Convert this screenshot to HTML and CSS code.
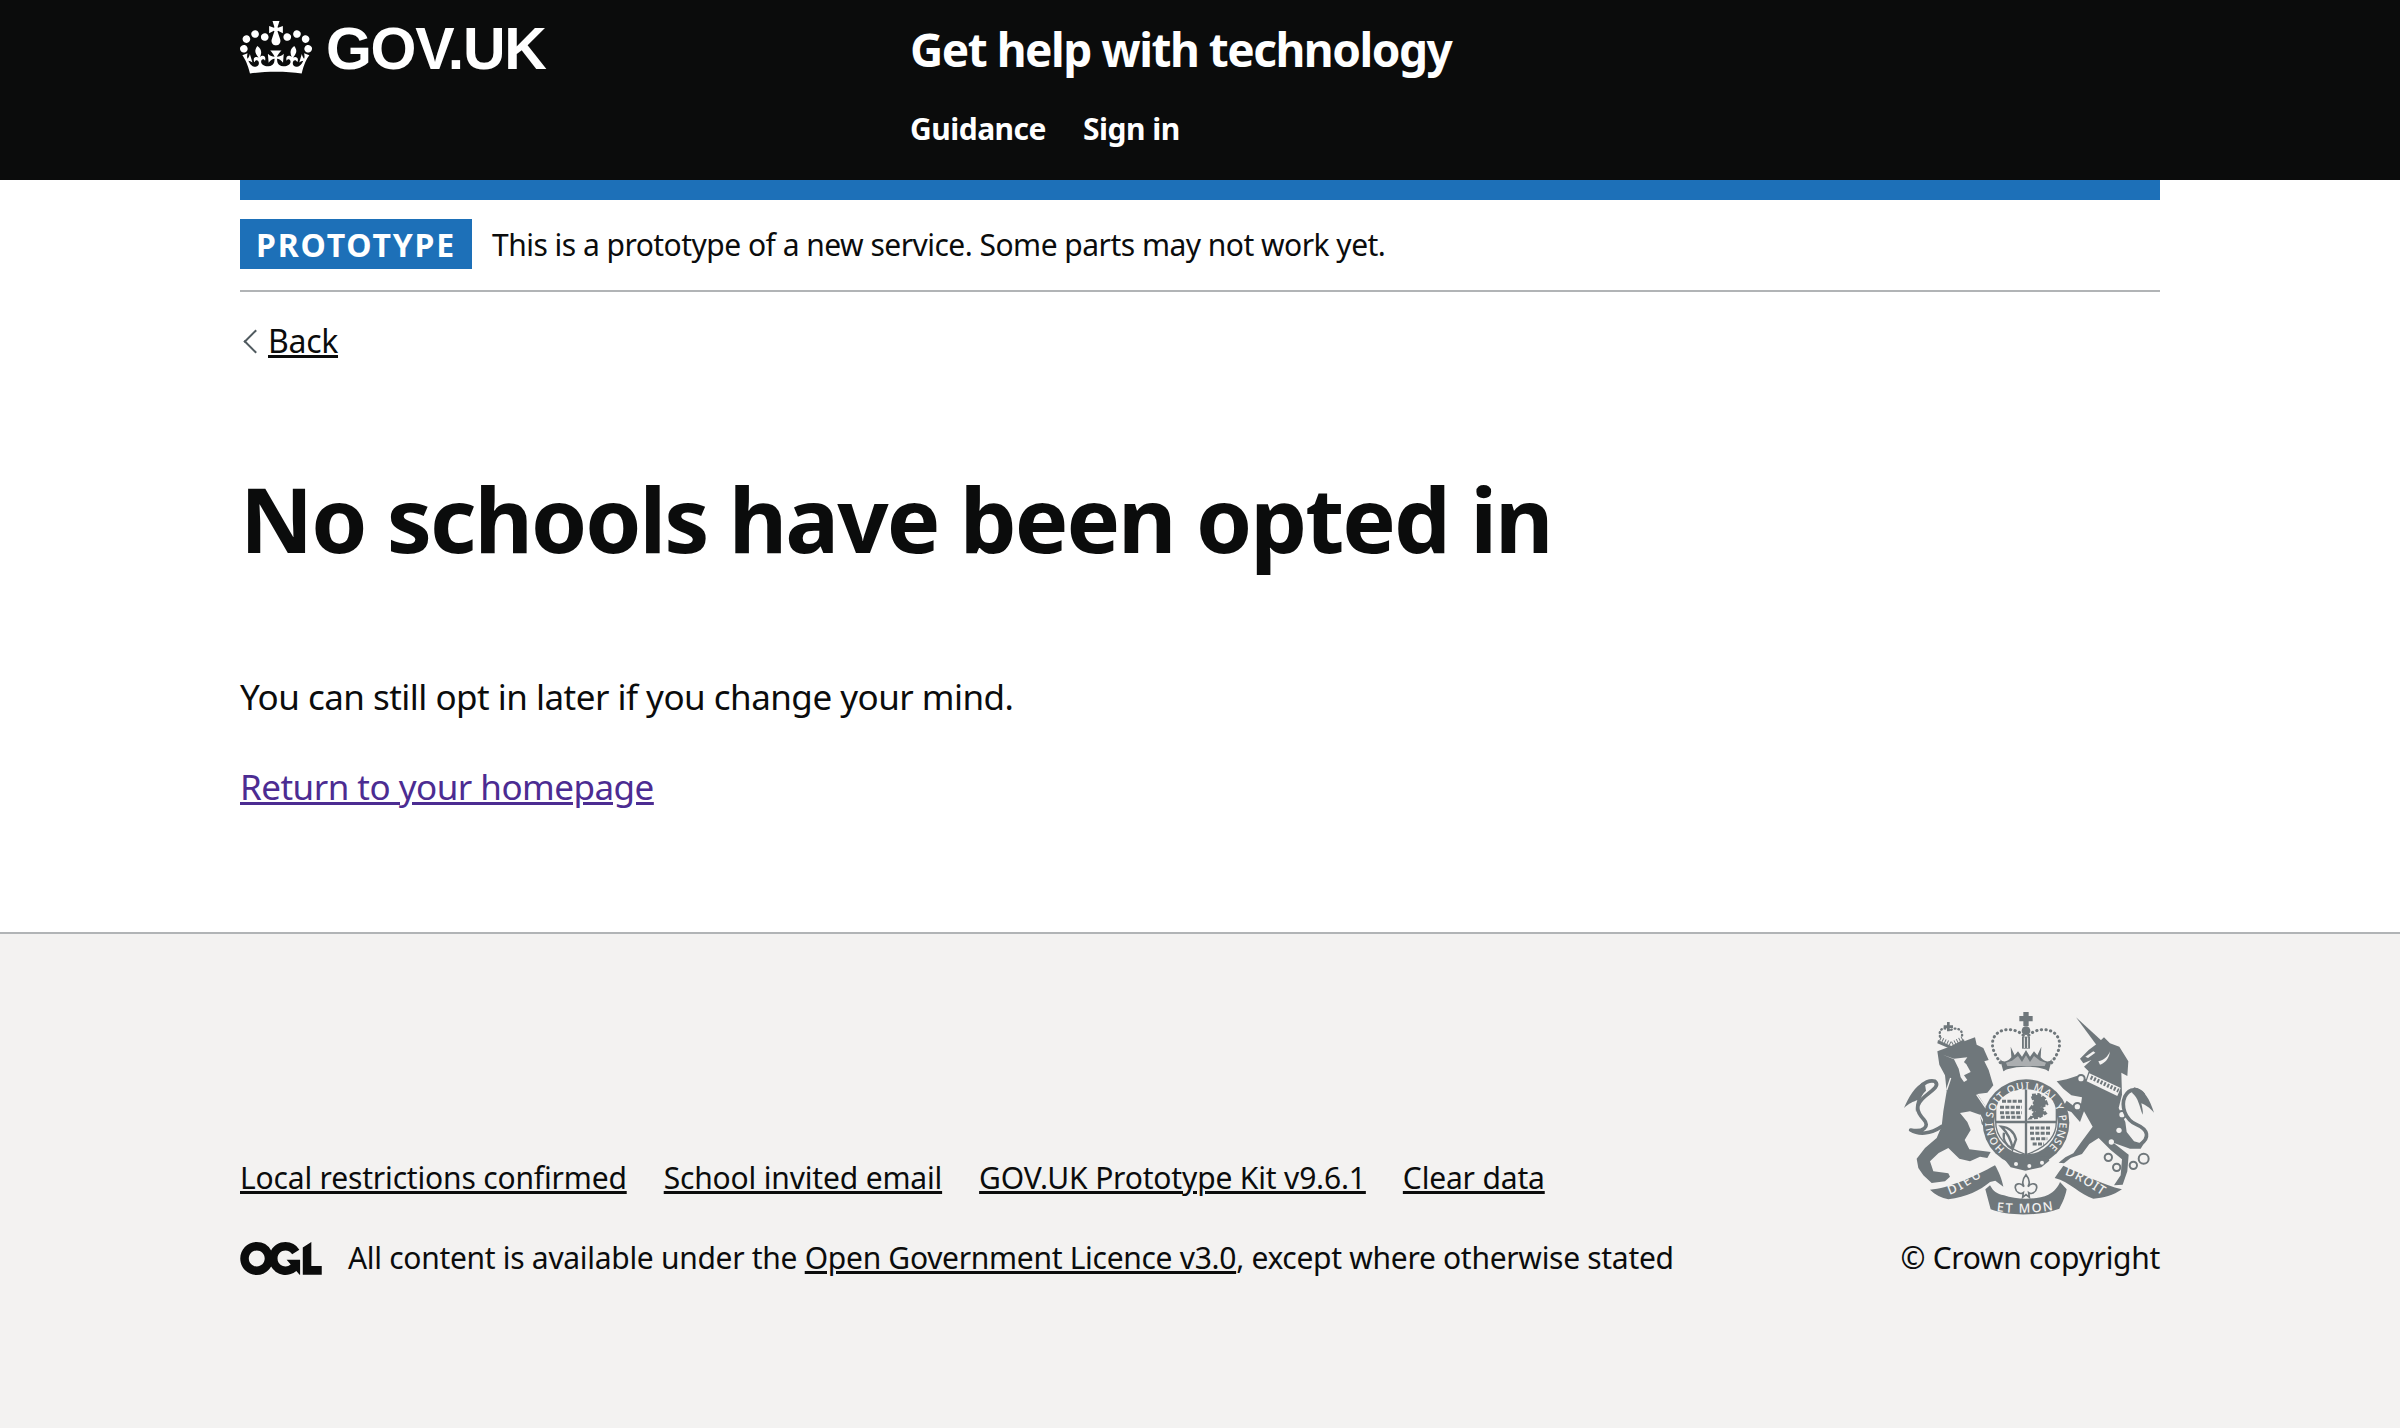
FILE: index.html
```html
<!DOCTYPE html>
<html lang="en">
<head>
<meta charset="utf-8">
<title>No schools have been opted in</title>
<link rel="stylesheet" href="styles.css">
</head>
<body>
<header class="site-header">
  <div class="header-inner">
    <a class="logo" href="#">
      <svg class="crown" viewBox="0 0 132 97" aria-hidden="true"><path fill="currentColor" fill-rule="evenodd" d="M25 30.2c3.5 1.5 7.7-.2 9.1-3.7 1.5-3.6-.2-7.8-3.9-9.2-3.6-1.4-7.6.3-9.1 3.9-1.4 3.5.3 7.5 3.9 9zM9 39.5c3.6 1.5 7.8-.2 9.2-3.7 1.5-3.6-.2-7.8-3.9-9.1-3.6-1.5-7.6.2-9.1 3.8-1.4 3.5.3 7.5 3.8 9zM4.4 57.2c3.5 1.5 7.7-.2 9.1-3.8 1.5-3.6-.2-7.7-3.9-9.1-3.5-1.5-7.6.3-9.1 3.8-1.4 3.5.3 7.6 3.9 9.1zm38.3-21.4c3.5 1.5 7.7-.2 9.1-3.8 1.5-3.6-.2-7.7-3.9-9.1-3.6-1.5-7.6.3-9.1 3.8-1.3 3.6.4 7.7 3.9 9.1zm64.4-5.6c-3.6 1.5-7.8-.2-9.1-3.7-1.5-3.6.2-7.8 3.8-9.2 3.6-1.4 7.7.3 9.2 3.9 1.3 3.5-.4 7.5-3.9 9zm15.9 9.3c-3.6 1.5-7.7-.2-9.1-3.7-1.5-3.6.2-7.8 3.7-9.1 3.6-1.5 7.7.2 9.2 3.8 1.5 3.5-.3 7.5-3.8 9zm4.7 17.7c-3.6 1.5-7.8-.2-9.2-3.8-1.5-3.6.2-7.7 3.9-9.1 3.6-1.5 7.7.3 9.2 3.8 1.3 3.5-.4 7.6-3.9 9.1zM89.3 35.8c-3.6 1.5-7.8-.2-9.2-3.8-1.4-3.6.2-7.7 3.9-9.1 3.6-1.5 7.7.3 9.2 3.8 1.4 3.6-.3 7.7-3.9 9.1zM69.7 17.7l8.9 4.7V9.3l-8.9 2.8c-.2-.3-.5-.6-.9-.9L72.4 0H59.6l3.5 11.2c-.3.3-.6.5-.9.9l-8.8-2.8v13.1l8.8-4.7c.3.3.6.7.9.9l-5 15.4v.1c-.2.8-.4 1.6-.4 2.4 0 4.1 3.1 7.5 7 8.1h.2c.3 0 .7.1 1 .1.4 0 .7 0 1-.1h.2c4-.6 7.1-4.1 7.1-8.1 0-.8-.1-1.7-.4-2.4V34l-5.1-15.4c.4-.2.7-.6 1-.9zM66 92.8c16.9 0 32.8 1.1 47.1 3.2 4-16.9 8.9-26.7 14-33.5l-9.6-3.4c1 4.9 1.1 7.2 0 10.2-1.5-1.4-3-4.3-4.2-8.7L108.6 76c2.8-2 5-3.2 7.5-3.3-4.4 9.4-10 11.9-13.6 11.2-4.3-.8-6.3-4.6-5.6-7.9 1-4.7 5.7-5.9 8-.5 4.3-8.7-3-11.4-7.6-8.8 7.1-7.2 7.9-13.5 2.1-21.1-8 6.1-8.1 12.3-4.5 20.8-4.7-5.4-12.1-2.5-9.5 6.2 3.4-5.2 7.9-2 7.2 3.1-.6 4.3-6.4 7.8-13.5 7.2-10.3-.9-10.9-8-11.2-13.8 2.5-.5 7.1 1.8 11 7.3L80.2 60c-4.1 4.4-8 5.3-12.3 5.4 1.4-4.4 8-11.6 8-11.6H55.5s6.4 7.2 7.9 11.6c-4.2-.1-8-1-12.3-5.4l1.4 16.4c3.9-5.5 8.5-7.7 10.9-7.3-.3 5.8-.9 12.8-11.1 13.8-7.2.6-12.9-2.9-13.5-7.2-.7-5 3.8-8.3 7.1-3.1 2.7-8.7-4.6-11.6-9.4-6.2 3.7-8.5 3.6-14.7-4.6-20.8-5.8 7.6-5 13.9 2.2 21.1-4.7-2.6-11.9.1-7.7 8.8 2.3-5.5 7.1-4.2 8.1.5.7 3.3-1.3 7.1-5.7 7.9-3.5.7-9-1.8-13.5-11.2 2.5.1 4.7 1.3 7.5 3.3l-4.7-15.4c-1.2 4.4-2.7 7.2-4.3 8.7-1.1-3-.9-5.3 0-10.2l-9.5 3.4c5 6.9 9.9 16.7 14 33.5 14.8-2.1 30.8-3.2 47.7-3.2z"/></svg>
      <span class="logo-text">GOV.UK</span>
    </a>
    <div class="header-content">
      <a class="service-name" href="#">Get help with technology</a>
      <nav class="header-nav">
        <a href="#">Guidance</a>
        <a href="#">Sign in</a>
      </nav>
    </div>
  </div>
</header>

<div class="width">
  <div class="blue-bar"></div>
  <div class="phase-banner">
    <strong class="tag">PROTOTYPE</strong>
    <span class="phase-text">This is a prototype of a new service. Some parts may not work yet.</span>
  </div>
  <a class="back-link" href="#">Back</a>
  <main class="main">
    <h1 class="heading">No schools have been opted in</h1>
    <p class="body-text">You can still opt in later if you change your mind.</p>
    <p class="body-text"><a class="visited-link" href="#">Return to your homepage</a></p>
  </main>
</div>

<footer class="footer">
  <div class="footer-inner">
    <div class="footer-meta">
      <ul class="footer-links">
        <li><a href="#">Local restrictions confirmed</a></li>
        <li><a href="#">School invited email</a></li>
        <li><a href="#">GOV.UK Prototype Kit v9.6.1</a></li>
        <li><a href="#">Clear data</a></li>
      </ul>
      <div class="licence">
        <svg class="ogl" viewBox="0 0 483.2 195.7" aria-hidden="true"><path fill="currentColor" d="M421.5 142.8V.1l-50.7 32.3v161.1h112.4v-50.7zm-122.3-9.6A47.12 47.12 0 0 1 221 97.8c0-26 21.1-47.1 47.1-47.1 16.7 0 31.4 8.7 39.7 21.8l42.7-27.2A97.63 97.63 0 0 0 268.1 0c-36.5 0-68.3 20.1-85.1 49.7A98 98 0 0 0 97.8 0C43.9 0 0 43.9 0 97.8s43.9 97.8 97.8 97.8c36.5 0 68.3-20.1 85.1-49.7a97.76 97.76 0 0 0 149.6 25.4l19.4 22.2h3v-87.8h-80l24.3 27.5zM97.8 145c-26 0-47.1-21.1-47.1-47.1s21.1-47.1 47.1-47.1 47.2 21 47.2 47S123.8 145 97.8 145"/></svg>
        <span>All content is available under the <a href="#">Open Government Licence v3.0</a>, except where otherwise stated</span>
      </div>
    </div>
    <div class="copyright">
      <svg class="crest" viewBox="0 0 900 720" aria-hidden="true">
        <defs>
          <path id="garter" d="M375 452A100 100 0 1 1 501 452"/>
          <path id="rbL" d="M208 590C245 580 280 550 316 530"/>
          <path id="rbM" d="M350 640C400 646 480 646 528 634"/>
          <path id="rbR" d="M553 530C590 540 630 570 676 598"/>
        </defs>
        <g class="crest-ink">
          <!-- lion crown -->
          <path d="M201 72h8V82h10v8H209v10h-8V90H191V82h10z"/>
          <path class="crest-open" d="M180 116c-6-30 20-28 30-18 10-10 40-10 36 18"/>
          <path class="crest-lattice" d="M180 122l34 16 34-18"/>
          <path d="M174 126l40 18 38-20 2 8-40 22-42-18z"/>
          <!-- lion tail -->
          <path class="crest-line" d="M186 385C150 410 115 410 92 396 130 404 150 385 132 365 108 340 105 320 135 295 165 272 178 262 165 250 150 245 130 254 118 270"/>
          <path d="M134 252C105 262 85 300 72 330 88 315 98 312 112 306 108 318 106 330 108 342 118 320 118 296 138 278z"/>
          <!-- lion body -->
          <path d="M172 160 285 118 290 140 310 150 326 186 313 190 326 216 336 250 340 262 322 284 292 288 312 318 330 345 346 385 338 400 318 392 305 378 300 350 270 340 240 345 262 372 272 396 254 426 268 454 332 462 322 480 300 476 270 490 238 482 205 450 176 465 150 490 160 520 205 526 210 536 195 550 155 555 130 532 115 510 110 482 135 450 170 420 185 385 190 340 200 280 195 232 178 200z"/>
          <path class="crest-bg" d="M188 170 222 182 262 178 252 192 262 204 272 222 252 232 262 246 252 252 242 238 236 212 222 184z"/>
          <circle cx="250" cy="206" r="11" class="crest-bg"/>
          <path class="crest-cut" d="M290 290 330 348M300 350 312 376M212 240 200 276"/>
          <!-- crown -->
          <path d="M430 42h16v12h12v16h-12v14h-16V70h-12V54h12z"/>
          <circle cx="438" cy="98" r="13"/>
          <path d="M426 116h24v36h-24z"/>
          <path class="crest-thin" d="M433 118v32M443 118v32"/>
          <path class="crest-dots" d="M430 112C400 84 345 90 338 130 334 156 350 176 362 196M446 112C476 84 530 90 538 130 542 156 526 176 514 196"/>
          <path d="M360 184C372 196 384 190 394 178L392 146 404 172 414 160 426 176 438 156 450 176 462 160 472 172 484 146 482 178C492 190 504 196 516 184L506 220H370z"/>
          <path class="crest-bg" d="M378 194 396 188 414 174 426 192 438 172 450 192 462 174 480 188 498 194 494 204H382z" opacity=".45"/>
          <!-- garter -->
          <circle cx="438" cy="374" r="130"/>
          <path class="crest-bg" d="M364 238C364 228 370 218 382 214 415 204 465 204 494 214 506 218 512 228 512 238 470 222 406 222 364 238z"/>
          <circle cx="438" cy="374" r="95" class="crest-bg"/>
          <path class="crest-shield" d="M347 330C352 298 388 272 438 272 488 272 524 298 529 330V372C529 420 490 452 438 470 386 452 347 420 347 372z"/>
          <path class="crest-divide" d="M438 272V470M347 372H529"/>
          <g class="crest-beasts">
            <path d="M366 310H426M360 328H426M360 344H426M362 358H426"/>
            <path d="M456 292 476 290 494 302 500 318 482 328 496 346 476 358 452 360 468 340 452 332 464 316z"/>
            <path d="M450 390H514M450 406H510M452 422H502M458 438H492"/>
          </g>
          <path class="crest-harp" d="M364 386C386 388 402 402 408 424L398 452C394 428 382 404 364 386ZM372 404C368 424 378 442 396 452"/>
          <path d="M372 482 504 474 508 488 484 508 436 518 392 508z"/>
          <circle cx="408" cy="498" r="6" class="crest-bg"/>
          <circle cx="448" cy="504" r="6" class="crest-bg"/>
          <circle cx="486" cy="494" r="6" class="crest-bg"/>
          <!-- unicorn -->
          <path d="M588 58 665 128 650 142z"/>
          <path d="M650 138 672 118 690 136 718 146 745 190 742 234 724 224 726 290 716 330 736 372 740 402 762 430 790 438 798 426 782 452 750 452 700 434 746 470 742 520 728 560 702 562 722 532 726 484 692 456 656 420 628 438 606 468 572 480 552 496 536 494 556 478 580 466 604 432 638 386 612 340 600 372 574 342 546 332 560 308 600 338 606 298 574 292 550 272 530 250 560 244 590 234 618 244 626 220 612 206 634 186 610 196 600 182 626 156z"/>
          <path class="crest-collar" d="M628 226 722 270 712 294 620 250z"/>
          <path class="crest-crenel" d="M632 238 716 278"/>
          <path class="crest-bg" d="M616 176 640 160 646 164 624 180z"/>
          <path class="crest-bg" d="M655 190C672 186 684 176 690 160 688 180 676 196 660 200z"/>
          <circle cx="603" cy="242" r="11" class="crest-ring"/>
          <circle cx="592" cy="326" r="11" class="crest-ring"/>
          <circle cx="726" cy="350" r="11" class="crest-ring"/>
          <circle cx="717" cy="397" r="8" class="crest-bg"/>
          <circle cx="694" cy="432" r="8" class="crest-bg"/>
          <circle cx="685" cy="478" r="11" class="crest-ring"/>
          <circle cx="710" cy="508" r="11" class="crest-ring"/>
          <circle cx="760" cy="502" r="11" class="crest-ring"/>
          <circle cx="791" cy="482" r="15" class="crest-ring"/>
          <!-- unicorn tail -->
          <path class="crest-line" d="M780 440C810 420 805 395 770 380 735 365 722 325 735 295 748 270 775 270 790 290"/>
          <path d="M762 268C792 272 810 306 822 344 808 328 798 322 784 316 786 326 790 340 788 350 778 325 776 300 756 284z"/>
          <!-- ribbon -->
          <path d="M150 575C205 572 285 535 345 502 356 520 366 545 370 566L346 548 330 552C300 578 260 596 205 604 185 600 165 590 150 575z"/>
          <path d="M524 540C532 528 542 514 550 503 610 530 670 560 726 574 700 592 670 600 640 602 600 590 570 552 524 540z"/>
          <path d="M316 574 330 562C340 580 350 588 372 592 410 606 470 606 505 590 522 582 535 566 540 552L560 574C555 600 545 618 538 632 480 654 390 656 332 634 326 614 322 594 316 574z"/>
          <path class="crest-fleur" d="M438 530C428 542 424 552 432 566 422 552 404 556 406 570 408 584 422 590 430 584L428 598 438 590 448 598 446 584C454 590 468 584 470 570 472 556 454 552 444 566 452 552 448 542 438 530z"/>
          <text class="crest-text crest-garter"><textPath href="#garter" textLength="484" lengthAdjust="spacing">HONI SOIT QUI MAL Y PENSE</textPath></text>
          <text class="crest-text crest-motto"><textPath href="#rbL" textLength="112" lengthAdjust="spacing">DIEU</textPath></text>
          <text class="crest-text crest-motto"><textPath href="#rbM" textLength="170" lengthAdjust="spacing">ET MON</textPath></text>
          <text class="crest-text crest-motto"><textPath href="#rbR" textLength="130" lengthAdjust="spacing">DROIT</textPath></text>
        </g>
      </svg>
      <span class="copyright-text">© Crown copyright</span>
    </div>
  </div>
</footer>
</body>
</html>
```
FILE: styles.css
```css
* { box-sizing: border-box; }
html, body { margin: 0; padding: 0; }
body {
  font-family: "Noto Sans", "Open Sans", sans-serif;
  color: #0b0c0c;
  background: #fff;
  min-height: 1428px;
  display: flex;
  flex-direction: column;
}
a { color: inherit; }

.site-header {
  background: #0b0c0c;
  color: #fff;
  height: 180px;
}
.header-inner {
  width: 1920px;
  margin: 0 auto;
  display: flex;
}
.logo {
  width: 670px;
  height: 100px;
  display: flex;
  align-items: flex-start;
  gap: 14px;
  padding-top: 21px;
  text-decoration: none;
}
.crown { width: 72px; height: 53px; display: block; }
.logo-text {
  font-family: "Liberation Sans", Arial, sans-serif;
  font-weight: 700;
  font-size: 59px;
  line-height: 56px;
  letter-spacing: -1.3px;
}
.header-content { display: flex; flex-direction: column; }
.service-name {
  font-size: 46px;
  font-weight: 700;
  line-height: 60px;
  margin-top: 19px;
  text-decoration: none;
  letter-spacing: -1.5px;
}
.header-nav {
  display: flex;
  gap: 37px;
  margin-top: 30px;
  font-size: 30px;
  font-weight: 700;
  line-height: 40px;
}
.header-nav a { text-decoration: none; letter-spacing: -0.5px; }

.width { width: 1920px; margin: 0 auto; flex: 1; }
.blue-bar { height: 20px; background: #1d70b8; }
.phase-banner {
  display: flex;
  align-items: center;
  gap: 20px;
  height: 92px;
  padding-bottom: 2px;
  border-bottom: 2px solid #b1b4b6;
}
.tag {
  background: #1d70b8;
  color: #fff;
  width: 232px;
  height: 50px;
  display: flex;
  align-items: center;
  justify-content: center;
  font-size: 32px;
  font-weight: 700;
  letter-spacing: 1.8px;
}
.phase-text { font-size: 30px; letter-spacing: -0.52px; }

.back-link {
  display: inline-block;
  position: relative;
  margin-top: 29px;
  padding-left: 28px;
  font-size: 32px;
  line-height: 40px;
  letter-spacing: -0.3px;
}
.back-link::before {
  content: "";
  position: absolute;
  left: 7px;
  top: 12px;
  width: 15px;
  height: 15px;
  border-left: 2px solid #505a5f;
  border-bottom: 2px solid #505a5f;
  transform: rotate(45deg);
}
.main { padding-top: 107px; }
.heading {
  margin: 0 0 104px;
  font-size: 90px;
  line-height: 100px;
  font-weight: 700;
  letter-spacing: -2px;
}
.body-text {
  margin: 0 0 40px;
  font-size: 35px;
  line-height: 50px;
  letter-spacing: -0.52px;
}
.visited-link { color: #4c2c92; }

.footer {
  height: 496px;
  background: #f3f2f1;
  border-top: 2px solid #b1b4b6;
  font-size: 30px;
  line-height: 40px;
  letter-spacing: -0.3px;
}
.footer-inner {
  width: 1920px;
  margin: 0 auto;
  display: flex;
  justify-content: space-between;
  align-items: flex-end;
  height: 344px;
}
.footer-links {
  list-style: none;
  display: flex;
  gap: 37px;
  margin: 0 0 40px;
  padding: 0;
  letter-spacing: -0.17px;
}
.licence { display: flex; align-items: center; gap: 26px; }
.ogl { width: 82px; height: 33px; display: block; }
.copyright {
  display: flex;
  flex-direction: column;
  align-items: flex-end;
}
.crest { width: 300px; height: 240px; display: block; margin-right: -20px; }
.crest-ink { fill: #6f777b; }
.crest-bg { fill: #f3f2f1; }
.crest-cut { fill: none; stroke: #f3f2f1; stroke-width: 4; }
.crest-open { fill: none; stroke: #6f777b; stroke-width: 7; stroke-dasharray: 2 9; stroke-linecap: round; }
.crest-lattice { fill: none; stroke: #6f777b; stroke-width: 12; stroke-dasharray: 3 5; }
.crest-line { fill: none; stroke: #6f777b; stroke-width: 11; stroke-linecap: round; stroke-linejoin: round; }
.crest-thin { fill: none; stroke: #f3f2f1; stroke-width: 3; }
.crest-dots { fill: none; stroke: #6f777b; stroke-width: 9; stroke-dasharray: 1 13; stroke-linecap: round; }
.crest-shield { fill: #f3f2f1; stroke: #6f777b; stroke-width: 4; }
.crest-divide { fill: none; stroke: #6f777b; stroke-width: 7; }
.crest-beasts { stroke: #6f777b; stroke-width: 9; stroke-dasharray: 12 4; fill: #6f777b; }
.crest-harp { fill: none; stroke: #6f777b; stroke-width: 7; }
.crest-collar { fill: #f3f2f1; }
.crest-crenel { fill: none; stroke: #6f777b; stroke-width: 12; stroke-dasharray: 6 5; }
.crest-ring { fill: #f3f2f1; stroke: #6f777b; stroke-width: 6; }
.crest-fleur { fill: #f3f2f1; stroke: #6f777b; stroke-width: 5; }
.crest-text { fill: #f3f2f1; font-family: "Noto Sans", sans-serif; font-weight: 500; letter-spacing: 0; }
.crest-garter { font-size: 31px; }
.crest-motto { font-size: 38px; }
```
